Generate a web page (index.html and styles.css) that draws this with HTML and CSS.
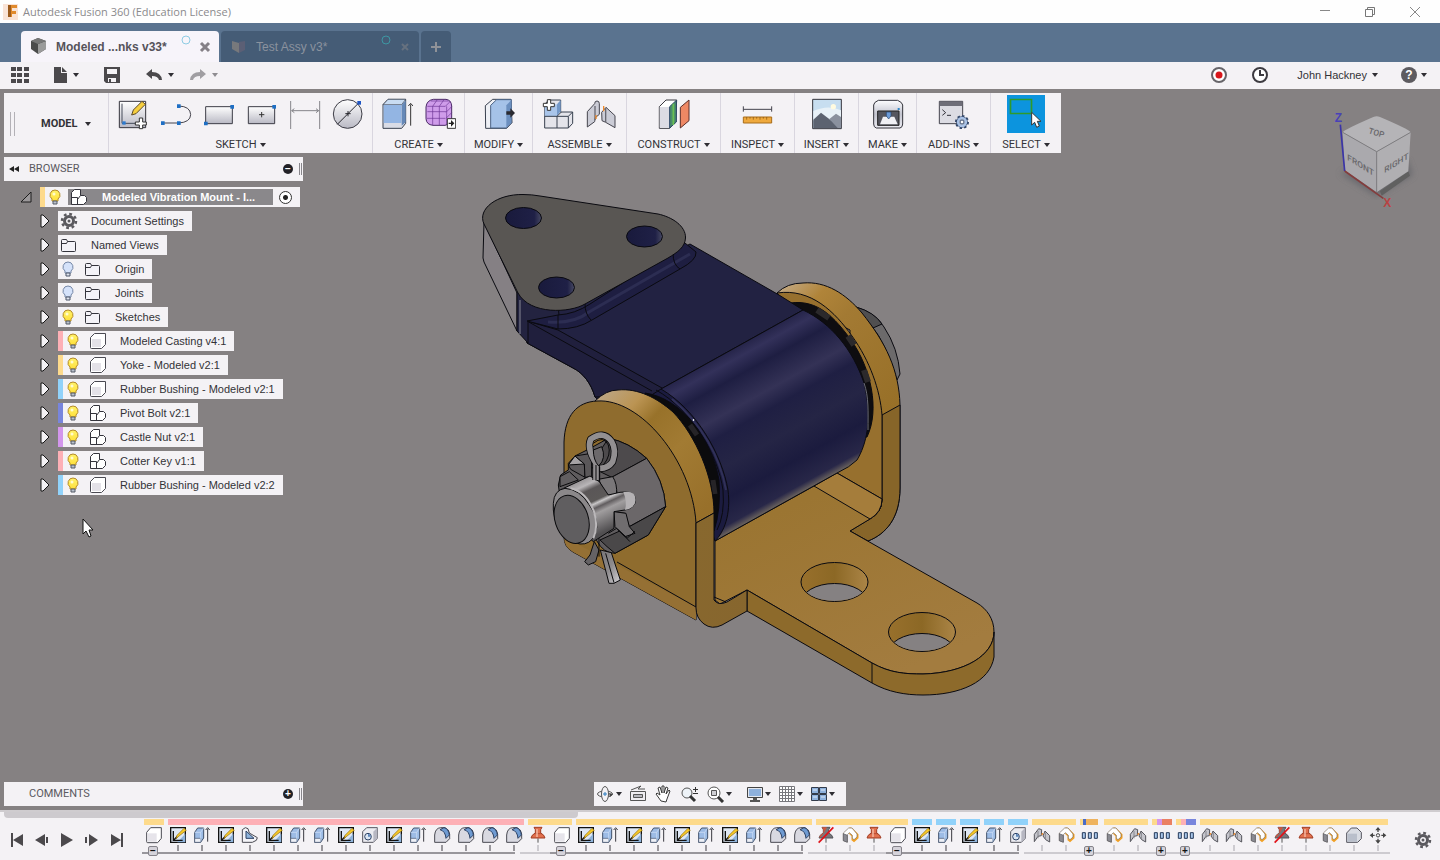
FILE: index.html
```html
<!DOCTYPE html>
<html lang="en">
<head>
<meta charset="utf-8">
<title>Autodesk Fusion 360 (Education License)</title>
<link rel="stylesheet" href="styles.css">
</head>
<body>
<svg class="defs" aria-hidden="true">
  <defs>
    <linearGradient id="metal" x1="0" y1="0" x2="0" y2="1"><stop offset="0" stop-color="#fff"/><stop offset="1" stop-color="#b9b9c4"/></linearGradient>
    <linearGradient id="steel" x1="0" y1="0" x2="0" y2="1"><stop offset="0" stop-color="#fdfdff"/><stop offset=".5" stop-color="#c4c5d0"/><stop offset="1" stop-color="#ececf2"/></linearGradient>
    <linearGradient id="glow" x1="0" y1="0" x2="0" y2="1"><stop offset="0" stop-color="#fff36b"/><stop offset="1" stop-color="#ffe03a"/></linearGradient>
  </defs>
  <symbol id="t-box" viewBox="432 150 60 60"><path d="M440 172l12-14h32v32l-11 13h-30q-3 0-3-3z" fill="#fff" stroke="#4a4a52" stroke-width="3"/><path d="M443 175h27v25h-27z" fill="#e6e4ea"/></symbol>
  <symbol id="t-sketch" viewBox="504 150 60 60"><path d="M512 158h44v44h-44z" fill="#dfe8f4" stroke="#111" stroke-width="4"/><path d="M532 202h24v-26z" fill="#8fb4dc"/><path d="M520 168v28h28M522 194l14-14" fill="none" stroke="#111" stroke-width="4"/><path d="M536 184l-8 8 3-11 21-21 7 6z" fill="#f7c928" stroke="#8c6a10" stroke-width="2"/></symbol>
  <symbol id="t-extrude" viewBox="576 150 60 60"><path d="M584 172l9-13h18v30l-9 13h-18z" fill="#9dbce6" stroke="#42526b" stroke-width="3"/><path d="M584 190h18v12h-18z" fill="#edf0f6" stroke="#42526b" stroke-width="2"/><path d="M584 172h18l9-13M602 172v28" fill="none" stroke="#d4e3f7" stroke-width="2"/><path d="M623 200v-38M617 165l6-7 6 7" fill="none" stroke="#3a3a40" stroke-width="3"/></symbol>
  <symbol id="t-rib" viewBox="720 150 60 60"><path d="M727 164l9-6 8 3 4 13 24 14-3 8-12 6h-30z" fill="#f4f4f8" stroke="#4a4a52" stroke-width="3"/><path d="M738 168v22h24z" fill="#8fb4dc" stroke="#2d4265" stroke-width="3"/></symbol>
  <symbol id="t-hole" viewBox="1080 150 60 60"><path d="M1088 170l12-12h32v32l-12 12h-32z" fill="#ececf1" stroke="#55555e" stroke-width="3"/><path d="M1120 170l12-12v32l-12 12z" fill="#b7b7c2"/><circle cx="1104" cy="185" r="10" fill="#dce7f4" stroke="#2d4265" stroke-width="3"/><path d="M1104 185v-9a10 10 0 0 1 9 9z" fill="#5d86bb"/></symbol>
  <symbol id="t-fillet" viewBox="1296 150 60 60"><path d="M1304 180q2-21 18-22h13q13 5 14 19v14l-11 11h-34z" fill="#d9d9e1" stroke="#4a4a52" stroke-width="3"/><path d="M1320 164q16 4 18 26l10-10q-2-19-16-22z" fill="#6f9bd2" stroke="#2d4265" stroke-width="3"/></symbol>
  <symbol id="t-pin" viewBox="144 150 60 60"><path d="M174 190v13" stroke="#555" stroke-width="3"/><path d="M162 157h24l-4 7v10q11 5 13 15h-42q2-10 13-15v-10z" fill="#e2704e" stroke="#a13e25" stroke-width="3"/><path d="M162 176h24" stroke="#a13e25" stroke-width="2"/><path d="M171 162v24" stroke="#f7c0ab" stroke-width="4"/></symbol>
  <symbol id="t-unpin" viewBox="144 150 60 60"><path d="M174 190v13" stroke="#555" stroke-width="3"/><path d="M162 157h24l-4 7v10q11 5 13 15h-42q2-10 13-15v-10z" fill="#77777c" stroke="#55555a" stroke-width="3"/><path d="M161 157h16l-10 18-10 12h-4q2-8 13-13v-10z" fill="#d0563c"/><path d="M152 203l44-46" stroke="#e01218" stroke-width="5"/></symbol>
  <symbol id="t-origin" viewBox="432 150 60 60"><path d="M460 160l7 2 17 17v9l-10 9-4-3v-12l-9-8" fill="none" stroke="#f0a026" stroke-width="7"/><path d="M442 174l16-15h10l15 18v9l-9 8-5-4v-9l-9-8-6 6v22l-12-4z" fill="#fff" stroke="#77695a" stroke-width="2"/><path d="M442 176l12 5v21l-12-5z" fill="#8b8b92" stroke="#55555c" stroke-width="2"/></symbol>
  <symbol id="t-joint" viewBox="216 150 60 60"><path d="M223 200v-22l13-17 9 3-1 18-10 2zM249 183l6-15 14 14v19l-12-7z" fill="#c5c5cc" stroke="#55555c" stroke-width="3"/><path d="M234 168v22M256 172v20" stroke="#88888f" stroke-width="3"/><path d="M245 179l4-4" stroke="#f08a26" stroke-width="4"/></symbol>
  <symbol id="t-pattern" viewBox="360 150 60 60"><path d="M367 173h9v17h-9zM385 173h9v17h-9zM403 173h9v17h-9z" fill="#a8c6ea" stroke="#25395a" stroke-width="3"/></symbol>
  <symbol id="t-solid" viewBox="1152 150 60 60"><path d="M1160 174l14-15h17l13 13v19l-11 11h-33z" fill="#d9dce3" stroke="#55555e" stroke-width="3"/><path d="M1163 176h28v24h-28z" fill="#b9bfcb"/></symbol>
  <symbol id="t-move" viewBox="1224 150 60 60"><circle cx="1254" cy="181" r="5" fill="none" stroke="#444" stroke-width="3"/><path d="M1254 156l8 10h-16zM1254 206l8-10h-16zM1229 181l10-8v16zM1279 181l-10-8v16z" fill="#444"/><path d="M1254 164v7M1254 191v7M1237 181h7M1264 181h7" stroke="#444" stroke-width="4"/></symbol>

  <symbol id="b-on" viewBox="0 0 14 18"><path d="M7 2a5 5 0 0 0-3 9v2h6v-2a5 5 0 0 0-3-9z" fill="url(#glow)" stroke="#b38a2b"/><path d="M5 13h4v3H5z" fill="#b8c0cc" stroke="#555b66"/><circle cx="6" cy="6" r="1.500" fill="#fffbd0"/></symbol>
  <symbol id="b-off" viewBox="0 0 14 18"><path d="M7 2a5 5 0 0 0-3 9v2h6v-2a5 5 0 0 0-3-9z" fill="#d5e2fa" stroke="#7587a6"/><path d="M5 13h4v3H5z" fill="#e0e4ee" stroke="#4b5568"/></symbol>
  <symbol id="b-folder" viewBox="0 0 18 18"><path d="M1.500 4.500q0-1 1-1h4l1 2h7q1 0 1 1v8q0 1-1 1h-12q-1 0-1-1zM1.500 7.500h5l1-2" fill="#f4f3f8" stroke="#34343c"/></symbol>
  <symbol id="b-part" viewBox="0 0 18 18"><path d="M1.500 5.500l4-4h11v11l-4 4h-10q-1 0-1-1z" fill="#fff" stroke="#4a4a52"/><path d="M3 7h9v8H3z" fill="#e4e2e8"/></symbol>
  <symbol id="b-asm" viewBox="0 0 18 18"><path d="M1.500 4.500l3-3h6v6h4l2 2v4l-3 3h-12z" fill="#fff" stroke="#34343c"/><path d="M1.500 9.500h6v7M7.500 11.500l3-4" fill="none" stroke="#34343c"/></symbol>
  <symbol id="gear" viewBox="0 0 18 18"><circle cx="9" cy="9" r="4.500" fill="none" stroke="#5a595e" stroke-width="3"/><circle cx="9" cy="9" r="7" fill="none" stroke="#5a595e" stroke-width="2.500" stroke-dasharray="2.750 2.750"/><circle cx="9" cy="9" r="1.500" fill="#5a595e"/></symbol>
  <symbol id="tri" viewBox="0 0 10 14"><path d="M1 1l2 0 6 6-6 6H1z" fill="#f4f2f5" stroke="#151515"/></symbol>
</svg>

<header class="titlebar">
  <svg width="16" height="16" viewBox="0 0 16 16" aria-hidden="true"><path d="M0 0h15v16H0z" fill="#f9e3d6"/><path d="M5 1h9v3H9v3h4v3H9v3H5z" fill="#e08a2c"/><path d="M5 1h3v12H5z" fill="#9b5a1c"/></svg>
  <h1 class="app-name">Autodesk Fusion 360 (Education License)</h1>
  <div class="window-buttons">
    <button aria-label="Minimize"><svg width="12" height="12" viewBox="0 0 12 12"><path d="M1 4.500h10" stroke="#888"/></svg></button>
    <button aria-label="Restore"><svg width="12" height="12" viewBox="0 0 12 12"><path d="M1.500 3.500h7v7h-7zM3.500 3.500v-2h7v7h-2" fill="none" stroke="#777"/></svg></button>
    <button aria-label="Close"><svg width="12" height="12" viewBox="0 0 12 12"><path d="M1 1l10 10M11 1L1 11" stroke="#888"/></svg></button>
  </div>
</header>

<nav class="tabs" aria-label="Open documents">
  <div class="tab tab-active">
    <svg width="18" height="18" viewBox="0 0 18 18" aria-hidden="true"><path d="M1 3l7-3 8 3v8l-8 5-7-5z" fill="#4b4b4b"/><path d="M8 6l8-3v8l-8 5z" fill="#9b9b9b"/><path d="M1 3l7-3 8 3-8 3z" fill="#777"/></svg>
    <button class="tab-name">Modeled ...nks v33*</button>
    <svg class="sync" width="10" height="10" viewBox="0 0 10 10"><circle cx="5" cy="5" r="4" fill="none" stroke="#8ecbe3"/></svg>
    <button class="tab-close" aria-label="Close tab"><svg width="12" height="12" viewBox="0 0 12 12"><path d="M2 2l8 8M10 2l-8 8" stroke="#858087" stroke-width="3"/></svg></button>
  </div>
  <div class="tab">
    <svg width="18" height="18" viewBox="0 0 18 18" aria-hidden="true"><path d="M2 3l7 2v10l-7-4z" fill="#77797c"/><path d="M9 4l6-1v9l-6 3z" fill="#5b5f75"/></svg>
    <button class="tab-name">Test Assy v3*</button>
    <svg class="sync" width="10" height="10" viewBox="0 0 10 10"><circle cx="5" cy="5" r="4" fill="none" stroke="#3d97a3"/></svg>
    <button class="tab-close" aria-label="Close tab"><svg width="12" height="12" viewBox="0 0 12 12"><path d="M3 3l6 6M9 3l-6 6" stroke="#66717f" stroke-width="2"/></svg></button>
  </div>
  <button class="tab-new" aria-label="New tab"><svg width="12" height="12" viewBox="0 0 12 12"><path d="M6 1v10M1 6h10" stroke="#8f9298" stroke-width="2"/></svg></button>
</nav>

<div class="quickbar">
  <button class="quick" aria-label="Data panel"><svg width="18" height="18" viewBox="0 0 18 18"><path d="M0 1h5v4H0zm6 0h5v4H6zm7 0h5v4h-5zM0 7h5v4H0zm6 0h5v4H6zm7 0h5v4h-5zM0 13h5v4H0zm6 0h5v4H6zm7 0h5v4h-5z" fill="#4b494c"/></svg></button>
  <button class="quick" aria-label="File"><svg width="14" height="18" viewBox="0 0 14 18"><path d="M0 1h7v6h6v10H0zM8 1l5 5H8z" fill="#4b494c"/></svg><i class="caret"></i></button>
  <button class="quick" aria-label="Save"><svg width="16" height="18" viewBox="0 0 16 18"><path d="M0 1h16v16H2l-2-2z" fill="#4b494c"/><path d="M3 3h10v5H3zM4 12h8v4H4z" fill="#f4f2f5"/><path d="M5 13h2v3H5z" fill="#4b494c"/></svg></button>
  <button class="quick" aria-label="Undo"><svg width="18" height="14" viewBox="0 0 18 14"><path d="M7 1v3q9 0 10 8h-3q-1-4-7-4v3L1 6z" fill="#4b494c"/></svg><i class="caret"></i></button>
  <button class="quick quick-redo" aria-label="Redo"><svg width="18" height="14" viewBox="0 0 18 14"><path d="M11 1v3q-9 0-10 8h3q1-4 7-4v3l6-5z" fill="#a09ea2"/></svg><i class="caret caret-dim"></i></button>
  <div class="account">
    <button aria-label="Record"><svg width="18" height="18" viewBox="0 0 18 18"><circle cx="9" cy="9" r="7" fill="#fff" stroke="#67656a" stroke-width="2"/><circle cx="9" cy="9" r="3.500" fill="#d8171b"/></svg></button>
    <button aria-label="Job status"><svg width="18" height="18" viewBox="0 0 18 18"><circle cx="9" cy="9" r="7" fill="#fff" stroke="#3c3a40" stroke-width="2"/><path d="M9 4v5h4" fill="none" stroke="#3c3a40" stroke-width="2"/></svg></button>
    <button class="user">John Hackney<i class="caret"></i></button>
    <button class="help" aria-label="Help"><span class="help-mark">?</span><i class="caret"></i></button>
  </div>
</div>

<main class="stage">
  <svg class="model" width="540" height="520" viewBox="470 185 540 520" role="img" aria-label="Vibration mount model">
    <defs>
      <linearGradient id="cyl" gradientUnits="userSpaceOnUse" x1="732" y1="350" x2="809" y2="489"><stop offset="0" stop-color="#26254a"/><stop offset=".06" stop-color="#33315a"/><stop offset=".16" stop-color="#1e1e42"/><stop offset=".33" stop-color="#343256"/><stop offset=".44" stop-color="#1f1f43"/><stop offset=".62" stop-color="#252545"/><stop offset=".8" stop-color="#1b1b3e"/><stop offset=".95" stop-color="#282748"/><stop offset="1" stop-color="#6f675f"/></linearGradient>
      <linearGradient id="tan" gradientUnits="userSpaceOnUse" x1="850" y1="480" x2="930" y2="660"><stop offset="0" stop-color="#9b7532"/><stop offset="1" stop-color="#a37c3f"/></linearGradient>
      <linearGradient id="rimf" gradientUnits="userSpaceOnUse" x1="600" y1="395" x2="714" y2="500"><stop offset="0" stop-color="#bca583"/><stop offset=".2" stop-color="#bb9453"/><stop offset=".35" stop-color="#98722a"/><stop offset=".6" stop-color="#a27b33"/><stop offset="1" stop-color="#98702a"/></linearGradient>
      <linearGradient id="rimb" gradientUnits="userSpaceOnUse" x1="782" y1="285" x2="900" y2="400"><stop offset="0" stop-color="#c3a983"/><stop offset=".2" stop-color="#b08439"/><stop offset=".4" stop-color="#a37a33"/><stop offset="1" stop-color="#987028"/></linearGradient>
      <linearGradient id="face" x1="0" y1="0" x2="1" y2="1"><stop offset="0" stop-color="#88682e"/><stop offset="1" stop-color="#87662e"/></linearGradient>
      <linearGradient id="bore" x1="0" y1="0" x2="1" y2="0"><stop offset="0" stop-color="#191a3c"/><stop offset=".8" stop-color="#1f2046"/><stop offset="1" stop-color="#484a63"/></linearGradient>
      <linearGradient id="wall" x1="0" y1="0" x2="1" y2="0"><stop offset="0" stop-color="#98702c"/><stop offset=".5" stop-color="#8c6825"/><stop offset="1" stop-color="#ab8547"/></linearGradient>
      <linearGradient id="bolt" gradientUnits="userSpaceOnUse" x1="130" y1="320" x2="205" y2="480"><stop offset="0" stop-color="#8d898b"/><stop offset=".15" stop-color="#b9b6b8"/><stop offset=".25" stop-color="#5a5657"/><stop offset=".45" stop-color="#5c5958"/><stop offset=".5" stop-color="#c9c7c8"/><stop offset=".57" stop-color="#615d5f"/><stop offset=".66" stop-color="#a19e9f"/><stop offset="1" stop-color="#514f51"/></linearGradient>
      <linearGradient id="tip" x1="0" y1="0" x2="1" y2="1"><stop offset="0" stop-color="#777476"/><stop offset=".5" stop-color="#8d8a8c"/><stop offset="1" stop-color="#d2d0d4"/></linearGradient>
      <clipPath id="h1"><ellipse cx="834.500" cy="582" rx="33" ry="19"/></clipPath>
      <clipPath id="h2"><ellipse cx="922" cy="632" rx="33" ry="19"/></clipPath>
    </defs>
    <g stroke="#0a0a10" stroke-linejoin="round">
      <path d="M856 307Q876 313 884 327Q898 348 900 374L897 380Q884 340 873 328z" fill="#6c6a6b"/>
      <path d="M856 307Q874 312 882 324L873 328z" fill="#504f50"/>
      <path d="M777 293Q787 283 803 283C826 281 846 294 862 313C886 343 899 370 900 405V488C900 518 886 534 868 541L850 531V330z" fill="url(#rimb)"/>
      <path d="M882 415L900 405V488C900 518 886 534 868 541L850 531L868 520Q882 513 882 500z" fill="#876529"/>
      <path d="M777 293C811 288 835 312 852 336C870 361 880 390 882 415V500Q882 513 868 520L820 500L785 303z" fill="#97702e"/>
      <path d="M790 303C818 299 835 318 851 340C871 368 880 410 867 437L830 440z" fill="#0e0d10"/>
      <path d="M817 310l12 8M848 336l6 9M864 370l4 12" stroke="#2b292b" stroke-width="6"/>
      <path d="M837 473L814 486L715 541V600L720 604L747 590L872 663C890 673 905 674 923 674C965 673 994 655 994 632C994 619 987 609 977 603L850 531L870 519Q882 512 882 499z" fill="url(#tan)"/>
      <path d="M837 473L882 499Q882 512 870 519L814 486z" fill="#a57d3b"/>
      <path d="M747 590L872 663C890 673 905 674 923 674C965 673 994 655 994 632V657C990 682 960 695 923 695C905 695 888 692 872 683L747 611z" fill="#8d6a2b"/>
      <path d="M872 663v20" fill="none"/>
      <ellipse cx="834.500" cy="582" rx="33.500" ry="19.500" fill="url(#wall)"/><ellipse cx="834.500" cy="603" rx="33.500" ry="19.500" fill="#858182" clip-path="url(#h1)"/>
      <ellipse cx="922" cy="632" rx="33.500" ry="19.500" fill="url(#wall)"/><ellipse cx="922" cy="653" rx="33.500" ry="19.500" fill="#858182" clip-path="url(#h2)"/>

      <path d="M527 321L560 310L690 244L779 295L803 310L661 389L640 440L595 397C591 383 583 373 573 368L527 343z" fill="#222242"/>
      <path d="M527 321L558 330L662 388L661 402L648 396L595 397C591 383 583 373 573 368L527 343z" fill="#201f3d"/>
      <path d="M527 321L652 391" fill="none"/>
      <path d="M661 389L803 310C831 323 853 350 864 383C873 420 866 445 857 460Q850 467 837 473L715 541L705 480z" fill="url(#cyl)"/>
      <path d="M661 389C697 410 722 455 728 490C731 515 724 532 715 541L690 470L650 396z" fill="#1b1b3f"/>
      <path d="M656 390C692 410 718 455 723 490Q725 515 717 530" fill="none"/>
      <path d="M645 393C682 398 712 440 719 480Q721 510 714 531L700 490z" fill="#0b0b0d"/>
      <path d="M690 425l7 10M713 480l2 14" stroke="#262427" stroke-width="5"/>
      <path d="M672 399C702 424 720 457 726 490" fill="none" stroke="#313158" stroke-width="2"/>
      <circle cx="693.500" cy="420" r=".5" fill="#fff" stroke="#fff"/>
      <path d="M864 383C869 397 868 412 868 430" fill="none" stroke="#6b6c78"/>

      <path d="M484 222L483 258L484 262L517 331V293z" fill="#858084"/>
      <path d="M517 292V331L528 343V321L560 325L558 305z" fill="#232340"/>
      <path d="M520 300v34" stroke="#55556a" stroke-width="2"/>
      <path d="M527 321L558 315Q575 314 590 304L685 243L696 252Q697 260 680 269L592 320Q578 329 558 329z" fill="#1e1e41"/>
      <path d="M548 322Q574 324 589 312L690 254" stroke="#2c2d52" stroke-width="3" fill="none"/>
      <path d="M558 315v14M585 304q0 10 6 16M673 253q0 12 7 16" fill="none"/>
      <path d="M484 224C477 209 497 194 523 194.500Q532 194.500 540 196L658 214C672 217 686 226 685.500 238C685 247 678 252 668 258L585 304C570 313 530 315 518 293z" fill="#595653"/>
      <g fill="url(#bore)"><ellipse cx="523.500" cy="218" rx="18" ry="10.500"/><ellipse cx="644.500" cy="236.500" rx="18" ry="10.500"/><ellipse cx="556.500" cy="287.500" rx="18" ry="10.500"/></g>

      <path d="M595 401Q606 390 618 390C638 388 657 398 673 412C696 436 714 478 714 513L696 523L660 440z" fill="url(#rimf)"/>
      <path d="M564 442C565 415 577 402 597 401C640 398 692 460 696 523V620L573 552Q564 547 564 537z" fill="#8f6c2e"/>
      <path d="M573 552Q564 547 564 537L696 607V620z" fill="#957034" stroke="none"/>
      <path d="M617 562L696 607" fill="none"/>
      <path d="M696 523L714 513V600Q718 606 727 602L747 590V611L722 625Q712 630 704 624Q696 618 696 608z" fill="url(#face)"/>
      <path d="M714 597l12 5" fill="none"/>
    </g>
    <g transform="translate(540 370) scale(.3333)" stroke="#09090b" stroke-width="3" stroke-linejoin="round">
      <path d="M55 345L62 315L85 300V280L105 258L145 238L205 205Q265 215 320 265Q372 330 377 410L325 495L225 550Q190 550 170 512L60 380z" fill="#5f5c5e"/>
      <path d="M205 205Q265 215 320 265L215 322L150 290z" fill="#4d4a4c"/>
      <path d="M215 322L320 265Q372 330 377 410L268 470L255 430L222 425L285 385L232 370z" fill="#6b6769"/>
      <path d="M268 470L377 410L325 495L225 550Q200 530 180 510z" fill="#4a4849"/>
      <path d="M85 285L105 258L133 282L135 322L92 298z" fill="#5c595b"/>
      <path d="M85 285L105 258L133 282z" fill="#a5a2a4"/>
      <path d="M105 258L155 250V320L135 322L133 282z" fill="#5a5759"/>
      <path d="M60 320L88 305L115 330L60 350z" fill="#615e60"/>
      <path d="M175 328L218 320Q232 340 230 376L200 375z" fill="#7a7779"/>
      <path d="M222 425L258 430L268 470L285 490L255 500L225 470z" fill="#706d6f"/>
      <path d="M205 490L230 475L270 515M235 480L262 504L285 484" fill="none"/>
      <path d="M60 360L150 318L178 335L205 375L240 367Q285 360 287 390Q285 415 255 420L222 425V475L160 515L90 450z" fill="url(#bolt)"/>
      <path d="M250 366Q287 360 287 390Q285 415 255 420Q262 395 250 366z" fill="#b5b2b4" stroke="none"/>
      <path d="M40 400Q42 360 75 355Q120 358 148 405Q182 450 165 495Q150 525 120 522Q50 510 40 420z" fill="#8b888a"/>
      <path d="M92 355Q138 365 162 425Q176 470 160 505" fill="none" stroke="#bbb8ba" stroke-width="6"/>
      <ellipse cx="95" cy="448" rx="50" ry="74" transform="rotate(-18 95 448)" fill="#605e60"/>
      <g fill="none"><path d="M168 330V280Q140 235 152 208Q190 180 215 215Q230 240 218 275Q205 295 180 295" stroke-width="22"/><path d="M168 330V280Q140 235 152 208Q190 180 215 215Q230 240 218 275Q205 295 180 295" stroke="#928f91" stroke-width="17"/><path d="M160 220Q190 195 205 225Q215 255 190 285M168 285V332M179 290V336"/></g>
      <path d="M160 240L185 230Q200 265 176 288Q160 270 160 240z" fill="#6c696b"/>
      <path d="M163 515L150 555L134 575L145 585L167 575L177 540z" fill="#656264"/>
      <path d="M181 540L207 640H222L241 630L214 548z" fill="url(#tip)"/><path d="M197 550l25 88" fill="none"/>
      <path d="M177 505V560" fill="none"/>
    </g>
  </svg>

  <svg class="viewcube" width="90" height="104" viewBox="420 325 270 312" role="img" aria-label="View cube">
    <defs><filter id="soft"><feGaussianBlur stdDeviation="9"/></filter></defs>
    <path d="M450 520L560 590L668 525L650 480z" fill="#5d5f65" opacity=".7" filter="url(#soft)"/>
    <path d="M570 575L655 515L660 528L575 588z" fill="#606060"/>
    <path d="M458 398L560 456V578L464 512z" fill="#aaa9ad"/><path d="M560 456L662 398L655 515L560 578z" fill="#b0afb2"/><path d="M458 398Q462 390 550 352Q560 348 570 352Q655 388 662 398L560 456z" fill="#b5b4b7"/>
    <path d="M458 398L560 456L662 398M560 456V578" fill="none" stroke="#7e7d80" stroke-width="3"/>
    <path d="M451 375L464 514" stroke="#3a34a8" stroke-width="5"/><path d="M464 514L580 596" stroke="#843c3c" stroke-width="5"/>
    <g class="cube-text"><text transform="translate(472 480) skewY(32)">FRONT</text><text transform="translate(583 521) skewY(-32)">RIGHT</text><text transform="translate(534 401) rotate(16)">TOP</text></g>
    <text class="axis" x="434" y="368" fill="#4941b8">Z</text><text class="axis" x="580" y="622" fill="#b84343">X</text>
  </svg>

  <div class="toolbar" role="toolbar" aria-label="Model tools">
    <div class="workspace"><span class="grip"></span><button class="menu">MODEL<i class="caret"></i></button></div>
    <section class="group w-sketch">
      <div class="tools">
        <button aria-label="Create sketch"><svg viewBox="354 291 96 96"><path d="M361 301h79v79h-79z" fill="url(#metal)" stroke="#33333b" stroke-width="3"/><path d="M369 308v59h65" fill="none" stroke="#444b58" stroke-width="3"/><path d="M370 361h10v10h-10z" fill="#2c7bd0"/><path d="M398 342l5-15 26-26 10 9-28 28z" fill="#f6cf3e" stroke="#5d4a2a" stroke-width="3"/><path d="M421 351h10v12h11v9h-11v11h-10v-11h-12v-9h12z" fill="#fff" stroke="#333" stroke-width="3"/></svg></button>
        <button aria-label="Line"><svg viewBox="483 291 96 96"><path d="M492 366h47q35-2 36-25-1-25-36-26" fill="none" stroke="#45454e" stroke-width="3"/><path d="M486 361h11v11h-11zM534 361h11v11h-11zM534 310h11v11h-11z" fill="#1e6fc4"/></svg></button>
        <button aria-label="Rectangle"><svg viewBox="612 291 96 96"><path d="M620 317h80v51h-80z" fill="url(#metal)" stroke="#3d3d46" stroke-width="3"/><path d="M615 362h11v11h-11zM694 312h11v11h-11z" fill="#1e6fc4"/></svg></button>
        <button aria-label="Center rectangle"><svg viewBox="741 291 96 96"><path d="M748 317h79v51h-79z" fill="url(#metal)" stroke="#3d3d46" stroke-width="3"/><path d="M788 333v16M780 341h16" stroke="#333" stroke-width="3"/><path d="M820 312h11v11h-11z" fill="#1e6fc4"/></svg></button>
        <button aria-label="Dimension"><svg viewBox="870 291 96 96"><path d="M875 300v84M962 300v84M878 329h81M886 323l-8 6 8 6M951 323l8 6-8 6" fill="none" stroke="#85858a" stroke-width="3"/></svg></button>
        <button aria-label="Circle"><svg viewBox="999 291 96 96"><circle cx="1046" cy="339" r="43" fill="url(#metal)" stroke="#3d3d46" stroke-width="3"/><path d="M1015 370l63-63M1047 330v16M1039 338h16" stroke="#26262c" stroke-width="3"/><path d="M1075 300h11v11h-11z" fill="#1e55c4"/></svg></button>
      </div>
      <button class="menu">SKETCH<i class="caret"></i></button>
    </section>
    <section class="group w-create">
      <div class="tools">
        <button aria-label="Extrude"><svg viewBox="33 21 96 96"><path d="M39 41l15-16h53v72l-12 15H39z" fill="#d9dce6" stroke="#38404f" stroke-width="3"/><path d="M39 41l15-16h53L95 41z" fill="#c9dcf2" stroke="#38404f" stroke-width="2"/><path d="M41 42h53v54H41z" fill="#93b5e3"/><path d="M95 42l12-14v66l-12 10z" fill="#6689b8"/><path d="M122 104V40M115 45l7-8 7 8" fill="none" stroke="#333" stroke-width="3"/></svg></button>
        <button aria-label="Create form"><svg viewBox="162 21 96 96"><path d="M168 48Q170 28 190 25h38q16 2 17 20v37q-4 18-20 21h-36q-20-2-21-20z" fill="#cf9cea" stroke="#4a2a66" stroke-width="3"/><path d="M172 62h56M170 82h56M188 46v56M208 46v56M172 46h54M230 46v56l14-16M182 30h54M226 46l16-16M188 46l14-20M208 46l14-20M228 64l17-17M228 82l17-17" fill="none" stroke="#6b3494" stroke-width="2"/><path d="M232 83h25v29h-25z" fill="#fff" stroke="#333" stroke-width="3"/><path d="M236 95h7v-8l10 10-10 10v-8h-7z" fill="#222"/></svg></button>
      </div>
      <button class="menu">CREATE<i class="caret"></i></button>
    </section>
    <section class="group w-modify">
      <div class="tools"><button aria-label="Press pull"><svg viewBox="339 21 96 96"><path d="M346 44l22-19h55l3 70-16 17h-63z" fill="#eef0f5" stroke="#38404f" stroke-width="3"/><path d="M362 43l18-17h44v70l-15 15h-47z" fill="#a5c2e8" stroke="#4d6486" stroke-width="3"/><path d="M409 43l15-16v68l-15 15z" fill="#6b8fbf"/><path d="M409 61h12v-9l14 14-14 14v-9h-12z" fill="#2a2a30"/></svg></button></div>
      <button class="menu">MODIFY<i class="caret"></i></button>
    </section>
    <section class="group w-assemble">
      <div class="tools">
        <button aria-label="New component"><svg viewBox="516 21 96 96"><path d="M524 40l12-13h36v36h36v34l-13 14h-71z" fill="#e4e4ea" stroke="#38404f" stroke-width="3"/><path d="M524 40h37v36h-37z" fill="#a9c5ea"/><path d="M561 40l11-13v34l-11 14z" fill="#7398c8"/><path d="M524 76h71v35M561 76v35M561 76l13-13M595 76l13-13" fill="none" stroke="#38404f" stroke-width="3"/><path d="M532 26h10v11h11v10h-11v11h-10V47h-12V37h12z" fill="#fff" stroke="#333" stroke-width="3"/></svg></button>
        <button aria-label="Joint"><svg viewBox="648 21 96 96"><path d="M655 62l22-24q0-8 7-8 7 0 7 8v32l-12 10-2 12-22 16zM698 64l13-15 27 25v36l-28-16-11-5z" fill="#cbccd6" stroke="#45454e" stroke-width="3"/><path d="M678 45v42M710 52v41" stroke="#686871" stroke-width="4"/><path d="M704 45v16M681 72v12" stroke="#ef8a2a" stroke-width="4"/></svg></button>
      </div>
      <button class="menu">ASSEMBLE<i class="caret"></i></button>
    </section>
    <section class="group w-assemble">
      <div class="tools"><button aria-label="Offset plane"><svg viewBox="861 21 96 96"><path d="M865 47l20-20h32l-3 65-18 20h-31z" fill="#fff" stroke="#38383f" stroke-width="3"/><path d="M866 48h29v62h-29z" fill="#dcdce4"/><path d="M896 47l20-19v65l-20 18z" fill="#4a8d6a" stroke="#2b4466" stroke-width="3"/><path d="M907 38v64" stroke="#6bbf52" stroke-width="5"/><path d="M928 49l26-22v62l-26 22z" fill="#ee8864" stroke="#5c2f2a" stroke-width="3"/></svg></button></div>
      <button class="menu">CONSTRUCT<i class="caret"></i></button>
    </section>
    <section class="group w-inspect">
      <div class="tools"><button aria-label="Measure"><svg viewBox="63 21 96 96"><path d="M67 46v16M152 46v16M67 55h85" stroke="#44444d" stroke-width="3"/><path d="M67 78h85v18H67z" fill="#efa93d" stroke="#a86d1b" stroke-width="3"/><path d="M77 78v8M87 78v5M97 78v8M107 78v5M117 78v8M127 78v5M137 78v8" stroke="#83530e" stroke-width="2"/></svg></button></div>
      <button class="menu">INSPECT<i class="caret"></i></button>
    </section>
    <section class="group w-insert">
      <div class="tools"><button aria-label="Insert image"><svg viewBox="270 21 96 96"><path d="M275 25h86v88h-86z" fill="#c7def0" stroke="#33333b" stroke-width="3"/><path d="M277 60q45-20 83-2v32h-83z" fill="#e8f1f7"/><circle cx="337" cy="47" r="8" fill="#fffbe0"/><path d="M277 86l23-21 60 46h-83z" fill="#5c6370"/><path d="M325 84l20-16 15 10v33h-10z" fill="#8a919e"/></svg></button></div>
      <button class="menu">INSERT<i class="caret"></i></button>
    </section>
    <section class="group w-make">
      <div class="tools"><button aria-label="3D print"><svg viewBox="456 21 96 96"><path d="M461 42q0-8 14-14h58q14 6 15 14v57q0 10-8 12h-71q-8-2-8-12z" fill="url(#steel)" stroke="#33333b" stroke-width="3"/><path d="M473 60h64v43h-64z" fill="#55565f" stroke="#222" stroke-width="3"/><path d="M480 100l9-23h34l10 23z" fill="#f0f0f4"/><path d="M499 63h14v12l-7 9-7-9z" fill="#6c9bd8" stroke="#26446c" stroke-width="2"/><path d="M533 51h6v6h-6z" fill="#3187c8"/></svg></button></div>
      <button class="menu">MAKE<i class="caret"></i></button>
    </section>
    <section class="group w-inspect">
      <div class="tools"><button aria-label="Scripts"><svg viewBox="654 21 96 96"><path d="M658 31h70v67h-70z" fill="#dcdce3" stroke="#44444d" stroke-width="3"/><path d="M659 32h68v13h-68z" fill="#6e6e78"/><path d="M667 56l10 9-10 8M681 73h12" fill="none" stroke="#33333b" stroke-width="3"/><circle cx="726" cy="93" r="17" fill="none" stroke="#33476a" stroke-width="8" stroke-dasharray="7 6"/><circle cx="726" cy="93" r="13" fill="#fff" stroke="#33476a" stroke-width="9"/><circle cx="726" cy="93" r="12" fill="none" stroke="#a9c2e6" stroke-width="7"/><circle cx="726" cy="93" r="6" fill="#fff" stroke="#33476a" stroke-width="3"/></svg></button></div>
      <button class="menu">ADD-INS<i class="caret"></i></button>
    </section>
    <section class="group group-last w-select">
      <div class="tools"><button class="picked" aria-label="Select"><svg viewBox="861 15 114 114"><path d="M871.500 28.500h63v42h-63z" fill="none" stroke="#2f9a2b" stroke-width="5"/><path d="M935 67v38l9-8 6 15 8-4-6-14h11z" fill="#fff" stroke="#333" stroke-width="3"/></svg></button></div>
      <button class="menu">SELECT<i class="caret"></i></button>
    </section>
  </div>

  <section class="browser">
    <header class="panel-head">
      <button aria-label="Collapse"><svg width="10" height="8" viewBox="0 0 10 8"><path d="M5 1v6L0 4zM10 1v6L5 4z" fill="#222"/></svg></button>
      <h2>BROWSER</h2>
      <button class="round" aria-label="Hide">−</button><span class="grip grip-small"></span>
    </header>
    <ul class="tree">
      <li class="root"><svg width="12" height="12" viewBox="0 0 12 12"><path d="M11 1v10H1z" fill="#9b989a" stroke="#1c1c1c"/></svg>
        <div class="node node-root stripe-yellow"><svg class="bulb"><use href="#b-on"/></svg><div class="root-name"><svg class="kind"><use href="#b-asm"/></svg><span>Modeled Vibration Mount - I...</span></div><input type="radio" class="activate" checked aria-label="Activate component"></div></li>
      <li><svg class="tri"><use href="#tri"/></svg><div class="node"><svg class="kind"><use href="#gear"/></svg><span>Document Settings</span></div></li>
      <li><svg class="tri"><use href="#tri"/></svg><div class="node"><svg class="kind"><use href="#b-folder"/></svg><span>Named Views</span></div></li>
      <li><svg class="tri"><use href="#tri"/></svg><div class="node"><svg class="bulb"><use href="#b-off"/></svg><svg class="kind"><use href="#b-folder"/></svg><span>Origin</span></div></li>
      <li><svg class="tri"><use href="#tri"/></svg><div class="node"><svg class="bulb"><use href="#b-off"/></svg><svg class="kind"><use href="#b-folder"/></svg><span>Joints</span></div></li>
      <li><svg class="tri"><use href="#tri"/></svg><div class="node"><svg class="bulb"><use href="#b-on"/></svg><svg class="kind"><use href="#b-folder"/></svg><span>Sketches</span></div></li>
      <li><svg class="tri"><use href="#tri"/></svg><div class="node stripe-pink"><svg class="bulb"><use href="#b-on"/></svg><svg class="kind"><use href="#b-part"/></svg><span>Modeled Casting v4:1</span></div></li>
      <li><svg class="tri"><use href="#tri"/></svg><div class="node stripe-yellow"><svg class="bulb"><use href="#b-on"/></svg><svg class="kind"><use href="#b-part"/></svg><span>Yoke - Modeled v2:1</span></div></li>
      <li><svg class="tri"><use href="#tri"/></svg><div class="node stripe-sky"><svg class="bulb"><use href="#b-on"/></svg><svg class="kind"><use href="#b-part"/></svg><span>Rubber Bushing - Modeled v2:1</span></div></li>
      <li><svg class="tri"><use href="#tri"/></svg><div class="node stripe-blue"><svg class="bulb"><use href="#b-on"/></svg><svg class="kind"><use href="#b-asm"/></svg><span>Pivot Bolt v2:1</span></div></li>
      <li><svg class="tri"><use href="#tri"/></svg><div class="node stripe-violet"><svg class="bulb"><use href="#b-on"/></svg><svg class="kind"><use href="#b-asm"/></svg><span>Castle Nut v2:1</span></div></li>
      <li><svg class="tri"><use href="#tri"/></svg><div class="node stripe-pink"><svg class="bulb"><use href="#b-on"/></svg><svg class="kind"><use href="#b-asm"/></svg><span>Cotter Key v1:1</span></div></li>
      <li><svg class="tri"><use href="#tri"/></svg><div class="node stripe-sky"><svg class="bulb"><use href="#b-on"/></svg><svg class="kind"><use href="#b-part"/></svg><span>Rubber Bushing - Modeled v2:2</span></div></li>
    </ul>
  </section>

  <svg class="pointer" width="12" height="20" viewBox="0 0 12 20" aria-hidden="true"><path d="M1 1v15l3-3 3 6 2-1-2-6h4z" fill="#fff" stroke="#111"/></svg>

  <div class="dock">
    <header class="panel-head comments"><h2>COMMENTS</h2><button class="round" aria-label="Add comment">+</button><span class="grip grip-small"></span></header>
    <div class="navbar" role="toolbar" aria-label="Navigation">
      <button aria-label="Orbit"><svg width="18" height="18" viewBox="0 0 18 18"><ellipse cx="8" cy="9" rx="7.500" ry="3" fill="none" stroke="#555"/><ellipse cx="8" cy="9" rx="3.500" ry="7.500" fill="#f4f2f5" stroke="#555"/><path d="M8 7v4M6 9h4" stroke="#2b7bbd"/><path d="M12 8l4 1-3 3z" fill="#444"/></svg><i class="caret"></i></button>
      <button aria-label="Look at"><svg width="18" height="18" viewBox="0 0 18 18"><path d="M1.500 15.500v-9h15v9zM2 5l10-4-3 3h7" fill="#efedf1" stroke="#555"/><path d="M4.500 9.500h9v3h-9z" fill="#b7b7bd" stroke="#555"/></svg></button>
      <button aria-label="Pan"><svg width="18" height="18" viewBox="0 0 18 18"><path d="M6 16L1 9l1-1 3 2L3 3l2-1 2 6V1h2v7l2-6 2 1-2 6 3-4 1 1-3 8-1 3z" fill="#fff" stroke="#3a3a3a"/></svg></button>
      <button aria-label="Zoom"><svg width="18" height="18" viewBox="0 0 18 18"><circle cx="6" cy="8" r="5" fill="#eef3f8" stroke="#555"/><path d="M9 11l5 5" stroke="#333" stroke-width="3"/><path d="M12 4.500h5M14.500 2v5M12 8.500h5" stroke="#333"/></svg></button>
      <button aria-label="Fit"><svg width="18" height="18" viewBox="0 0 18 18"><circle cx="7" cy="8" r="6" fill="#fff" stroke="#555"/><path d="M4.500 5.500h5v5h-5z" fill="#cfcfd4" stroke="#555"/><path d="M11 12l5 5" stroke="#333" stroke-width="3"/></svg><i class="caret"></i></button>
      <button class="spaced" aria-label="Display settings"><svg width="18" height="18" viewBox="0 0 18 18"><path d="M1.500 2.500h15v10h-15z" fill="#e4e8ef" stroke="#444"/><path d="M3 4h12v7H3z" fill="#8eb1dd"/><path d="M7 13h4v2h3v2H4v-2h3z" fill="#555"/></svg><i class="caret"></i></button>
      <button aria-label="Grid"><svg width="18" height="18" viewBox="0 0 18 18"><path d="M1.500 1.500h15v15h-15zM4.500 1v16M7.500 1v16M10.500 1v16M13.500 1v16M1 4.500h16M1 7.500h16M1 10.500h16M1 13.500h16" fill="#fff" stroke="#77777c"/></svg><i class="caret"></i></button>
      <button aria-label="Viewports"><svg width="18" height="18" viewBox="0 0 18 18"><path d="M1.500 2.500h7v6h-7zM9.500 2.500h7v6h-7zM1.500 9.500h7v6h-7zM9.500 9.500h7v6h-7z" fill="#8eb1dd" stroke="#333b4a"/><path d="M3 5h4M11 5h4M3 12h4M11 12h4" stroke="#dfeaf7"/></svg><i class="caret"></i></button>
    </div>
  </div>
</main>

<footer class="timeline">
  <div class="scroll"><div class="thumb"></div></div>
  <div class="track">
    <div class="playback">
      <button aria-label="Go to start"><svg width="14" height="14" viewBox="0 0 14 14"><path d="M1 0h2v14H1zM13 1v12L3 7z" fill="#4b494c"/></svg></button>
      <button aria-label="Step back"><svg width="14" height="14" viewBox="0 0 14 14"><path d="M0 7l10-6v12zM11 4h2v6h-2z" fill="#4b494c"/></svg></button>
      <button aria-label="Play"><svg width="14" height="14" viewBox="0 0 14 14"><path d="M1 0l12 7-12 7z" fill="#4b494c"/></svg></button>
      <button aria-label="Step forward"><svg width="14" height="14" viewBox="0 0 14 14"><path d="M13 7L4 1v12zM0 4h2v6H0z" fill="#4b494c"/></svg></button>
      <button aria-label="Go to end"><svg width="14" height="14" viewBox="0 0 14 14"><path d="M11 0h2v14h-2zM1 1v12l10-6z" fill="#4b494c"/></svg></button>
    </div>
    <div class="history">
      <ul class="run bar-yellow dark"><li class="fold"><svg><use href="#t-box"/></svg><button>−</button></li></ul>
      <ul class="run bar-pink dark"><li><svg><use href="#t-sketch"/></svg></li><li><svg><use href="#t-extrude"/></svg></li><li><svg><use href="#t-sketch"/></svg></li><li><svg><use href="#t-rib"/></svg></li><li><svg><use href="#t-sketch"/></svg></li><li><svg><use href="#t-extrude"/></svg></li><li><svg><use href="#t-extrude"/></svg></li><li><svg><use href="#t-sketch"/></svg></li><li><svg><use href="#t-hole"/></svg></li><li><svg><use href="#t-sketch"/></svg></li><li><svg><use href="#t-extrude"/></svg></li><li><svg><use href="#t-fillet"/></svg></li><li><svg><use href="#t-fillet"/></svg></li><li><svg><use href="#t-fillet"/></svg></li><li class="last"><svg><use href="#t-fillet"/></svg></li></ul>
      <ul class="run bar-yellow"><li class="first"><svg><use href="#t-pin"/></svg></li><li class="fold dark"><svg><use href="#t-box"/></svg><button>−</button></li></ul>
      <ul class="run bar-yellow dark"><li><svg><use href="#t-sketch"/></svg></li><li><svg><use href="#t-extrude"/></svg></li><li><svg><use href="#t-sketch"/></svg></li><li><svg><use href="#t-extrude"/></svg></li><li><svg><use href="#t-sketch"/></svg></li><li><svg><use href="#t-extrude"/></svg></li><li><svg><use href="#t-sketch"/></svg></li><li><svg><use href="#t-extrude"/></svg></li><li><svg><use href="#t-fillet"/></svg></li><li class="last"><svg><use href="#t-fillet"/></svg></li></ul>
      <ul class="run bar-yellow"><li class="first"><svg><use href="#t-unpin"/></svg></li><li><svg><use href="#t-origin"/></svg></li><li><svg><use href="#t-pin"/></svg></li><li class="fold dark"><svg><use href="#t-box"/></svg><button>−</button></li></ul>
      <ul class="run bar-sky dark"><li><svg><use href="#t-sketch"/></svg></li></ul>
      <ul class="run bar-sky dark"><li><svg><use href="#t-extrude"/></svg></li></ul>
      <ul class="run bar-sky dark"><li><svg><use href="#t-sketch"/></svg></li></ul>
      <ul class="run bar-sky dark"><li><svg><use href="#t-extrude"/></svg></li></ul>
      <ul class="run bar-sky dark"><li class="last"><svg><use href="#t-hole"/></svg></li></ul>
      <ul class="run bar-yellow"><li class="first"><svg><use href="#t-joint"/></svg></li><li><svg><use href="#t-origin"/></svg></li></ul>
      <ul class="run bar-mix-a"><li class="fold"><svg><use href="#t-pattern"/></svg><button>+</button></li></ul>
      <ul class="run bar-yellow"><li><svg><use href="#t-origin"/></svg></li><li><svg><use href="#t-joint"/></svg></li></ul>
      <ul class="run bar-mix-b"><li class="fold"><svg><use href="#t-pattern"/></svg><button>+</button></li></ul>
      <ul class="run bar-mix-c"><li class="fold"><svg><use href="#t-pattern"/></svg><button>+</button></li></ul>
      <ul class="run bar-yellow"><li><svg><use href="#t-joint"/></svg></li><li><svg><use href="#t-joint"/></svg></li><li><svg><use href="#t-origin"/></svg></li><li><svg><use href="#t-unpin"/></svg></li><li><svg><use href="#t-pin"/></svg></li><li><svg><use href="#t-origin"/></svg></li><li><svg><use href="#t-solid"/></svg></li><li><svg><use href="#t-move"/></svg></li></ul>
    </div>
    <button class="settings" aria-label="Timeline settings"><svg width="18" height="18"><use href="#gear"/></svg></button>
  </div>
</footer>
</body>
</html>
```

FILE: styles.css
```css
* { box-sizing: border-box; }

body {
  margin: 0;
  height: 100vh;
  display: flex;
  flex-direction: column;
  overflow: hidden;
  background: #f4f2f5;
  color: #333237;
  font: 11px/16px "Liberation Sans", Arial, sans-serif;
}

button {
  display: flex;
  align-items: center;
  justify-content: center;
  padding: 0;
  border: 0;
  background: none;
  color: inherit;
  font: inherit;
}

h1, h2 { margin: 0; font-size: 11px; font-weight: 400; }
ul { margin: 0; padding: 0; list-style: none; }
svg { display: block; flex: none; }
.defs { position: absolute; width: 0; height: 0; }

.caret {
  flex: none;
  border: 3px solid transparent;
  border-top: 4px solid #2f2e33;
  border-bottom: 0;
}
.caret-dim { border-top-color: #8e8c90; }

/* title bar */
.titlebar {
  flex: none;
  display: flex;
  align-items: center;
  height: 23px;
  padding: 0 3px;
  gap: 4px;
  background: #fefefe;
}
.app-name { color: #8b8a8d; font: 11px/16px "Open Sans", "Noto Sans", sans-serif; }
.window-buttons { display: flex; margin-left: auto; }
.window-buttons button { width: 45px; height: 20px; }

/* document tabs */
.tabs {
  flex: none;
  display: flex;
  align-items: flex-end;
  gap: 2px;
  height: 39px;
  padding-left: 21px;
  background: #5a738f;
}
.tab {
  display: flex;
  align-items: center;
  width: 198px;
  height: 31px;
  padding: 0 8px 0 9px;
  gap: 8px;
  border-radius: 4px 4px 0 0;
  background: #455c76;
  color: #8b929e;
  font-size: 12px;
}
.tab-active { background: #f7f4fa; color: #55525a; font-weight: 700; }
.tab-name { margin-right: auto; }
.sync { align-self: flex-start; margin-top: 4px; }
.tab-new { width: 30px; height: 31px; border-radius: 4px 4px 0 0; background: #455c76; }

/* quick access bar */
.quickbar {
  flex: none;
  display: flex;
  align-items: center;
  height: 27px;
  padding: 0 13px 1px 11px;
  gap: 25px;
  background: #f4f2f5;
}
.quick { gap: 5px; }
.quick-redo { margin-left: -10px; }
.account { display: flex; align-items: center; gap: 23px; margin-left: auto; }
.user { gap: 5px; padding-left: 5px; }
.help { gap: 4px; }
.help-mark {
  width: 16px;
  height: 16px;
  border-radius: 50%;
  background: #5d5b60;
  color: #fff;
  font-size: 12px;
  font-weight: 700;
}

/* canvas */
.stage {
  position: relative;
  flex: 1;
  min-height: 0;
  display: flex;
  flex-direction: column;
  align-items: flex-start;
  padding: 4px;
  background: #858182;
}
.model { position: absolute; left: calc(50% - 250px); top: 96px; }
.viewcube { position: absolute; right: 20px; top: 19px; }
.cube-text { fill: #68676b; font: 500 25px Roboto, sans-serif; }
.axis { font: 700 36px "Liberation Sans", sans-serif; }
.pointer { position: absolute; left: 82px; top: 429px; }

/* ribbon */
.toolbar, .browser, .dock { position: relative; }
.toolbar { display: flex; height: 60px; background: #f4f2f5; }
.workspace {
  display: flex;
  align-items: center;
  width: 105px;
  padding: 2px 0 0 6px;
  gap: 26px;
  border-right: 1px solid #d9d6df;
}
.workspace .menu { font-weight: 700; gap: 7px; }
.grip { width: 5px; height: 24px; border: solid #b3b1b6; border-width: 0 1px; }
.grip-small { width: 3px; height: 12px; border-color: #88868b; }
.menu { gap: 3px; font: 11px/16px Roboto, sans-serif; }
.group {
  display: flex;
  flex-direction: column;
  align-items: center;
  padding-top: 2px;
  border-right: 1px solid #d9d6df;
}
.group-last { border-right: 0; }
.tools { display: flex; height: 44px; }
.tools button { width: 43px; height: 38px; }
.tools svg { width: 32px; height: 32px; }
.tools .picked { width: 38px; background: #0c94de; }
.tools .picked svg { width: 38px; height: 38px; }
.w-sketch { width: 264px; }
.w-create { width: 92px; }
.w-modify { width: 68px; }
.w-assemble { width: 94px; }
.w-inspect { width: 74px; }
.w-insert { width: 64px; }
.w-make { width: 58px; }
.w-select { width: 70px; }

/* browser and comments */
.panel-head {
  display: flex;
  align-items: center;
  width: 299px;
  height: 24px;
  padding: 0 1px 0 5px;
  gap: 10px;
  background: #f4f2f5;
  color: #5b5960;
  font-family: Roboto, sans-serif;
}
.panel-head h2 { margin-right: auto; }
.panel-head .grip { margin-left: -4px; }
.comments { padding-left: 25px; }
.round {
  width: 10px;
  height: 10px;
  border-radius: 50%;
  background: #222126;
  color: #fff;
  font: 700 10px/10px "Liberation Sans", sans-serif;
}
.browser { margin-top: 4px; }
.tree { display: grid; gap: 4px; margin-top: 6px; padding-left: 36px; }
.tree li { display: flex; align-items: center; gap: 8px; }
.tree .root { gap: 7px; margin-left: -20px; }
.tri { width: 10px; height: 14px; }
.bulb { width: 14px; height: 18px; }
.kind { width: 18px; height: 18px; }
.node {
  display: flex;
  align-items: center;
  height: 20px;
  padding: 0 8px 0 2px;
  gap: 9px;
  border: 0 solid;
  background: #f4f2f5;
}
.bulb { margin-left: 1px; }
.node .kind + span { margin-left: 4px; }
.node-root { width: 260px; padding-right: 8px; margin-left: 1px; gap: 6px; }
.root-name { display: flex; align-items: center; flex: 1; height: 16px; background: #8a888b; color: #fff; font-weight: 700; }
.root-name .kind { margin-left: 2px; }
.node .root-name .kind + span { margin-left: 14px; }
.activate {
  appearance: none;
  width: 13px;
  height: 13px;
  margin: 0;
  border: 1px solid #333;
  border-radius: 50%;
  background: radial-gradient(#222 2px, #fff 3px);
}
.stripe-pink, .stripe-yellow, .stripe-sky, .stripe-blue, .stripe-violet { border-left-width: 5px; }
.stripe-pink { border-left-color: #fdb0b6; }
.stripe-yellow { border-left-color: #fdda8c; }
.stripe-sky { border-left-color: #91d2fa; }
.stripe-blue { border-left-color: #7885dd; }
.stripe-violet { border-left-color: #d396ec; }

/* bottom dock */
.dock {
  display: grid;
  grid-template-columns: 1fr auto 1fr;
  align-self: stretch;
  margin-top: auto;
  align-items: center;
}
.navbar { display: flex; align-items: center; height: 24px; padding: 0 12px 0 3px; gap: 8px; background: #f4f2f5; }
.navbar button { gap: 1px; }
.navbar .caret { margin-right: -1px; }
.navbar .spaced { margin-left: 7px; }

/* timeline */
.timeline { flex: none; height: 50px; border-top: 2px solid #cfcccf; background: #f4f2f5; }
.scroll { height: 7px; padding-left: 4px; }
.thumb { width: 40%; height: 6px; border-radius: 0 0 4px 4px; background: #cdcace; }
.track { display: flex; }
.playback { flex: none; display: flex; align-items: center; width: 144px; height: 41px; padding-left: 10px; gap: 11px; }
.history { display: flex; align-items: flex-start; gap: 4px; }
.run { display: flex; gap: 4px; border-top: 6px solid; }
.run li { position: relative; width: 20px; }
.run svg { width: 20px; height: 20px; }
.run li::after {
  content: "";
  display: block;
  width: 24px;
  height: 7px;
  margin: 0 -2px;
  border-bottom: 2px solid #cdcbd0;
  background: linear-gradient(#cdcbd0, #cdcbd0) 11px 0 / 2px 6px no-repeat;
}
.dark li::after, .run .dark::after {
  border-bottom-color: #98969b;
  background-image: linear-gradient(#98969b, #98969b);
}
.run .fold::after { background: none; }
.run .last::after { width: 13px; }
.run .first::after { width: 30px; margin-left: -8px; background-position-x: 17px; }
.fold button {
  position: absolute;
  left: 4px;
  top: 21px;
  z-index: 1;
  width: 10px;
  height: 10px;
  border: 1px solid #85838a;
  border-radius: 2px;
  background: #d5d3da;
  color: #111;
  font: 700 10px/8px "Liberation Sans", sans-serif;
}
.bar-yellow { border-top-color: #fdda8c; }
.bar-pink { border-top-color: #fdb0b6; }
.bar-sky { border-top-color: #91d2fa; }
.bar-mix-a, .bar-mix-b, .bar-mix-c { border-top: 0; padding-top: 6px; background: 0 0 / 100% 6px no-repeat; }
.bar-mix-a { background-image: linear-gradient(90deg, #fdda8c 3px, #4a6cc8 3px 6px, #efb35e 6px 18px, transparent 18px); }
.bar-mix-b { background-image: linear-gradient(90deg, #fdda8c 5px, #d396ec 5px 10px, #ea8063 10px); }
.bar-mix-c { background-image: linear-gradient(90deg, #fdda8c 5px, #fdb0b6 5px 10px, #7885dd 10px); }
.settings { width: 18px; height: 41px; margin: 0 8px 0 auto; }
```
